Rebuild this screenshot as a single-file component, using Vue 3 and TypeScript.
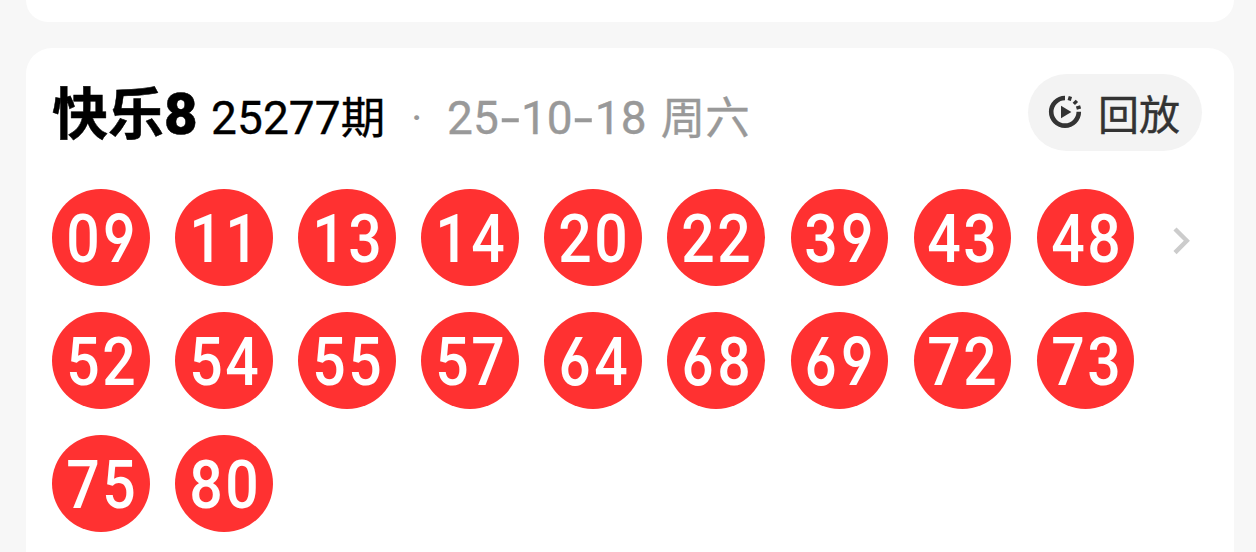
<script setup lang="ts">
const issue = '25277'
const dateParts: string[] = ['25', '10', '18']
const balls: string[] = [
  '09', '11', '13', '14', '20', '22', '39', '43', '48',
  '52', '54', '55', '57', '64', '68', '69', '72', '73',
  '75', '80',
]

// 6 and 9 use the open, straight-stemmed figure forms
const isOpen = (digit: string): boolean => digit === '6' || digit === '9'
</script>

<template>
  <main class="page">
    <section class="card previous"></section>
    <section class="card draw">
      <header class="head">
        <h1 class="title">快乐<span class="eight">8</span></h1>
        <p class="issue"><span class="num">{{ issue }}</span>期</p>
        <span class="dot">·</span>
        <p class="date">
          <template v-for="(part, i) in dateParts" :key="i"><span v-if="i > 0" class="dash"><span class="stretch">-</span></span><span class="num">{{ part }}</span></template><span class="week">周六</span>
        </p>
        <button class="replay" type="button">
          <svg class="replay-icon" viewBox="0 0 34 34" aria-hidden="true">
            <path d="M17 3A13.8 13.8 0 1 0 30.8 16.8" fill="none" stroke="#333" stroke-width="4.6" />
            <path d="M21.2 5.5l1.2-4M25.8 8.9l3.1-3M28.4 13.1l4.2-1.3" fill="none" stroke="#333" stroke-width="3.4" />
            <path d="M13 10.7v12.6L23.4 17z" fill="#333" />
          </svg>
          <span class="replay-text">回放</span>
        </button>
      </header>
      <div class="body">
        <ul class="balls">
          <li v-for="ball in balls" :key="ball" class="ball"><span v-for="(digit, i) in ball" :key="i" class="digit" :class="{ open: isOpen(digit) }">{{ digit }}</span></li>
        </ul>
        <svg class="arrow" viewBox="0 0 20 30" aria-hidden="true">
          <path d="M3 3L14.8 14.8L3 26.6" fill="none" stroke="#ccc" stroke-width="4.4" />
        </svg>
      </div>
    </section>
  </main>
</template>

<style>
body {
  margin: 0;
  background: #f7f7f7;
}
</style>

<style scoped>
.page {
  height: 552px;
  padding: 0 22px 0 26px;
  box-sizing: border-box;
  overflow: hidden;
  background: #f7f7f7;
  font-family: "Noto Sans CJK SC", sans-serif;
}
.card {
  box-sizing: border-box;
  background: #fff;
}
.previous {
  height: 22px;
  border-radius: 0 0 26px 26px;
}
.draw {
  margin-top: 26px;
  height: 530px;
  padding: 26px 32px 0 26px;
  border-radius: 26px;
}
.head {
  display: flex;
  height: 77px;
  align-items: baseline;
  line-height: 71px;
  white-space: nowrap;
}
.title,
.issue,
.date {
  margin: 0;
}
.title {
  width: 159px;
  font-size: 56px;
  font-weight: 700;
  color: #000;
  -webkit-text-stroke: 0.5px #000;
}
.eight {
  font-family: Roboto, sans-serif;
  font-size: 58px;
  font-weight: 900;
}
.issue,
.date {
  font-size: 44.5px;
  font-weight: 400;
  -webkit-text-stroke: 0.35px currentColor;
}
.issue {
  width: 174px;
  color: #000;
}
.num {
  font-family: Roboto, sans-serif;
  font-size: 46px;
  letter-spacing: 0.1px;
}
.dot {
  width: 62px;
  box-sizing: border-box;
  padding-left: 26px;
  font-family: Roboto, sans-serif;
  font-size: 44px;
  color: #999;
}
.date {
  color: #999;
}
.dash {
  display: inline-block;
  width: 22px;
  text-align: center;
  font-family: Roboto, sans-serif;
  font-size: 46px;
}
.stretch {
  display: inline-block;
  transform: scaleX(1.5);
}
.week {
  margin-left: 14px;
}
.replay {
  display: flex;
  align-self: flex-start;
  align-items: center;
  width: 174px;
  height: 77px;
  margin-left: auto;
  padding: 0 0 0 20px;
  border: 0;
  border-radius: 39px;
  background: #f3f3f3;
  color: #333;
  font: 400 41px/77px "Noto Sans CJK SC", sans-serif;
  -webkit-text-stroke: 0.4px #333;
}
.replay-icon {
  width: 34px;
  height: 34px;
  margin: 0 16px 2px 0;
}
.replay-text {
  height: 77px;
}
.body {
  display: flex;
  margin-top: 38px;
}
.balls {
  display: grid;
  grid-template-columns: repeat(9, 97.5px);
  gap: 25.6px;
  margin: 0;
  padding: 0;
  list-style: none;
}
.ball {
  display: flex;
  justify-content: center;
  height: 97.4px;
  border-radius: 50%;
  background: #ff3131;
}
.digit {
  display: flex;
  justify-content: center;
  width: 36px;
  height: 97px;
  padding-top: 2px;
  box-sizing: border-box;
  font: 500 67px/97px Roboto, sans-serif;
  color: #fff;
  transform: scaleX(0.88);
}
.open {
  padding-top: 1px;
  font: 600 65.5px/97px Inter, sans-serif;
  font-feature-settings: "ss01" 1;
  transform: scaleX(0.81);
}
.arrow {
  width: 20px;
  height: 30px;
  margin: 37px 0 0 38px;
}
</style>
